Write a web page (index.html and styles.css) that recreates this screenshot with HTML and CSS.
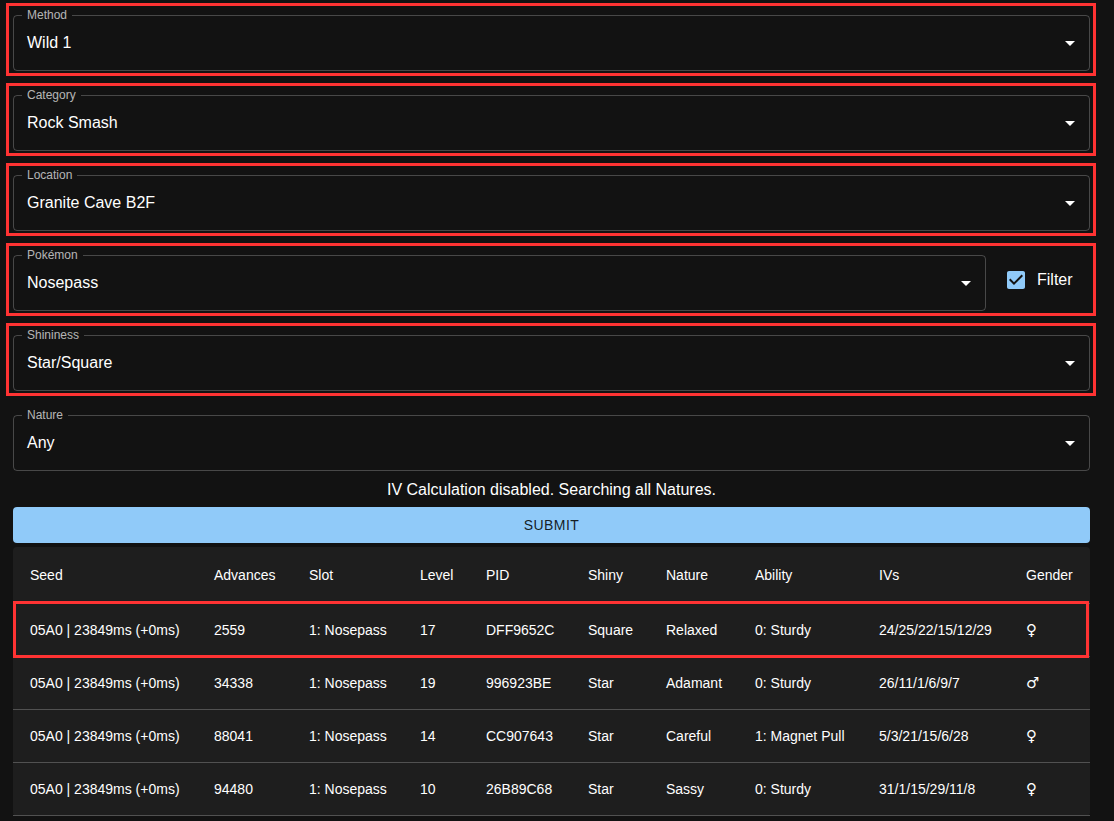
FILE: index.html
```html
<!DOCTYPE html>
<html lang="en">
<head>
<meta charset="utf-8">
<title>Wild Search</title>
<link rel="stylesheet" href="styles.css">
</head>
<body>
<main class="page">
  <div class="group hl">
    <div class="field"><span class="label">Method</span><span class="value">Wild 1</span>
      <svg class="arrow" viewBox="0 0 24 24"><path d="M7 10l5 5 5-5z"/></svg></div>
  </div>
  <div class="group hl">
    <div class="field"><span class="label">Category</span><span class="value">Rock Smash</span>
      <svg class="arrow" viewBox="0 0 24 24"><path d="M7 10l5 5 5-5z"/></svg></div>
  </div>
  <div class="group hl">
    <div class="field"><span class="label">Location</span><span class="value">Granite Cave B2F</span>
      <svg class="arrow" viewBox="0 0 24 24"><path d="M7 10l5 5 5-5z"/></svg></div>
  </div>
  <div class="group hl row">
    <div class="field narrow"><span class="label">Pokémon</span><span class="value">Nosepass</span>
      <svg class="arrow" viewBox="0 0 24 24"><path d="M7 10l5 5 5-5z"/></svg></div>
    <label class="check">
      <svg class="box" viewBox="0 0 24 24"><path d="M19 3H5c-1.11 0-2 .9-2 2v14c0 1.1.89 2 2 2h14c1.11 0 2-.9 2-2V5c0-1.1-.89-2-2-2zm-9 14l-5-5 1.41-1.41L10 14.17l7.59-7.59L19 8l-9 9z"/></svg>
      <span>Filter</span>
    </label>
  </div>
  <div class="group hl">
    <div class="field"><span class="label">Shininess</span><span class="value">Star/Square</span>
      <svg class="arrow" viewBox="0 0 24 24"><path d="M7 10l5 5 5-5z"/></svg></div>
  </div>
  <div class="group last">
    <div class="field"><span class="label">Nature</span><span class="value">Any</span>
      <svg class="arrow" viewBox="0 0 24 24"><path d="M7 10l5 5 5-5z"/></svg></div>
  </div>
  <p class="notice">IV Calculation disabled. Searching all Natures.</p>
  <button class="submit">SUBMIT</button>
  <div class="table">
    <div class="tr head">
      <div>Seed</div><div>Advances</div><div>Slot</div><div>Level</div><div>PID</div><div>Shiny</div><div>Nature</div><div>Ability</div><div>IVs</div><div>Gender</div>
    </div>
    <div class="tr mark">
      <div>05A0 | 23849ms (+0ms)</div><div>2559</div><div>1: Nosepass</div><div>17</div><div>DFF9652C</div><div>Square</div><div>Relaxed</div><div>0: Sturdy</div><div>24/25/22/15/12/29</div><div class="sex">♀</div>
    </div>
    <div class="tr">
      <div>05A0 | 23849ms (+0ms)</div><div>34338</div><div>1: Nosepass</div><div>19</div><div>996923BE</div><div>Star</div><div>Adamant</div><div>0: Sturdy</div><div>26/11/1/6/9/7</div><div class="sex">♂</div>
    </div>
    <div class="tr">
      <div>05A0 | 23849ms (+0ms)</div><div>88041</div><div>1: Nosepass</div><div>14</div><div>CC907643</div><div>Star</div><div>Careful</div><div>1: Magnet Pull</div><div>5/3/21/15/6/28</div><div class="sex">♀</div>
    </div>
    <div class="tr">
      <div>05A0 | 23849ms (+0ms)</div><div>94480</div><div>1: Nosepass</div><div>10</div><div>26B89C68</div><div>Star</div><div>Sassy</div><div>0: Sturdy</div><div>31/1/15/29/11/8</div><div class="sex">♀</div>
    </div>
  </div>
</main>
</body>
</html>
```
FILE: styles.css
```css
html, body {
  margin: 0;
  background: #121212;
  color: #fff;
  font-family: "Liberation Sans", Arial, "DejaVu Sans", sans-serif;
}
body { height: 821px; overflow: hidden; }
.page {
  padding: 3px 0 0 6px;
  width: 1090px;
}
.group {
  box-sizing: border-box;
  width: 1090px;
  height: 73px;
  margin: 0 0 7px 0;
  border: 3px solid transparent;
  padding: 9px 3px 2px 4px;
}
.group.last { margin-bottom: 2px; }
.group.hl { border-color: #ff3333; }
.group.row { display: flex; align-items: flex-start; }
.field {
  position: relative;
  box-sizing: border-box;
  width: 1077px;
  height: 56px;
  border: 1px solid rgba(255, 255, 255, 0.23);
  border-radius: 4px;
  padding-left: 13px;
  display: flex;
  align-items: center;
}
.field.narrow { width: 973px; flex: none; }
.label {
  position: absolute;
  left: 8px;
  top: -8px;
  padding: 0 5px;
  background: #121212;
  font-size: 12px;
  line-height: 14px;
  color: rgba(255, 255, 255, 0.7);
}
.value { font-size: 16px; line-height: 24px; }
.arrow {
  position: absolute;
  right: 7px;
  top: 15px;
  width: 24px;
  height: 24px;
  fill: #fff;
}
.check {
  display: flex;
  align-items: center;
  height: 49px;
  margin-left: 18px;
  font-size: 16px;
  gap: 9px;
}
.check .box { width: 24px; height: 24px; fill: #90caf9; }
.notice {
  margin: 0 0 0 7px;
  width: 1077px;
  text-align: center;
  font-size: 16px;
  line-height: 24px;
}
.submit {
  display: block;
  margin: 5px 0 0 7px;
  width: 1077px;
  height: 36px;
  border: 0;
  border-radius: 4px;
  background: #90caf9;
  color: rgba(0, 0, 0, 0.87);
  font-family: inherit;
  font-size: 14px;
  letter-spacing: 0.4px;
}
.table {
  margin: 4px 0 0 7px;
  width: 1077px;
  background: #1e1e1e;
  border-radius: 4px;
  font-size: 14px;
}
.tr {
  position: relative;
  display: grid;
  grid-template-columns: 185px 95px 111px 66px 102px 78px 89px 124px 147px 80px;
  height: 53px;
  box-sizing: border-box;
  border-bottom: 1px solid #515151;
  align-items: center;
}
.tr.head { height: 57px; }
.tr > div { padding-left: 16px; line-height: 20px; white-space: nowrap; }
.tr.head > div { padding-bottom: 1px; }
.tr > div:first-child { padding-left: 17px; }
.tr > .sex { font-family: "DejaVu Sans", sans-serif; font-size: 15px; }
.tr.mark::after {
  content: "";
  position: absolute;
  left: 0;
  right: 1px;
  top: -3px;
  bottom: -2px;
  border: 3px solid #ff3333;
  pointer-events: none;
}
```
